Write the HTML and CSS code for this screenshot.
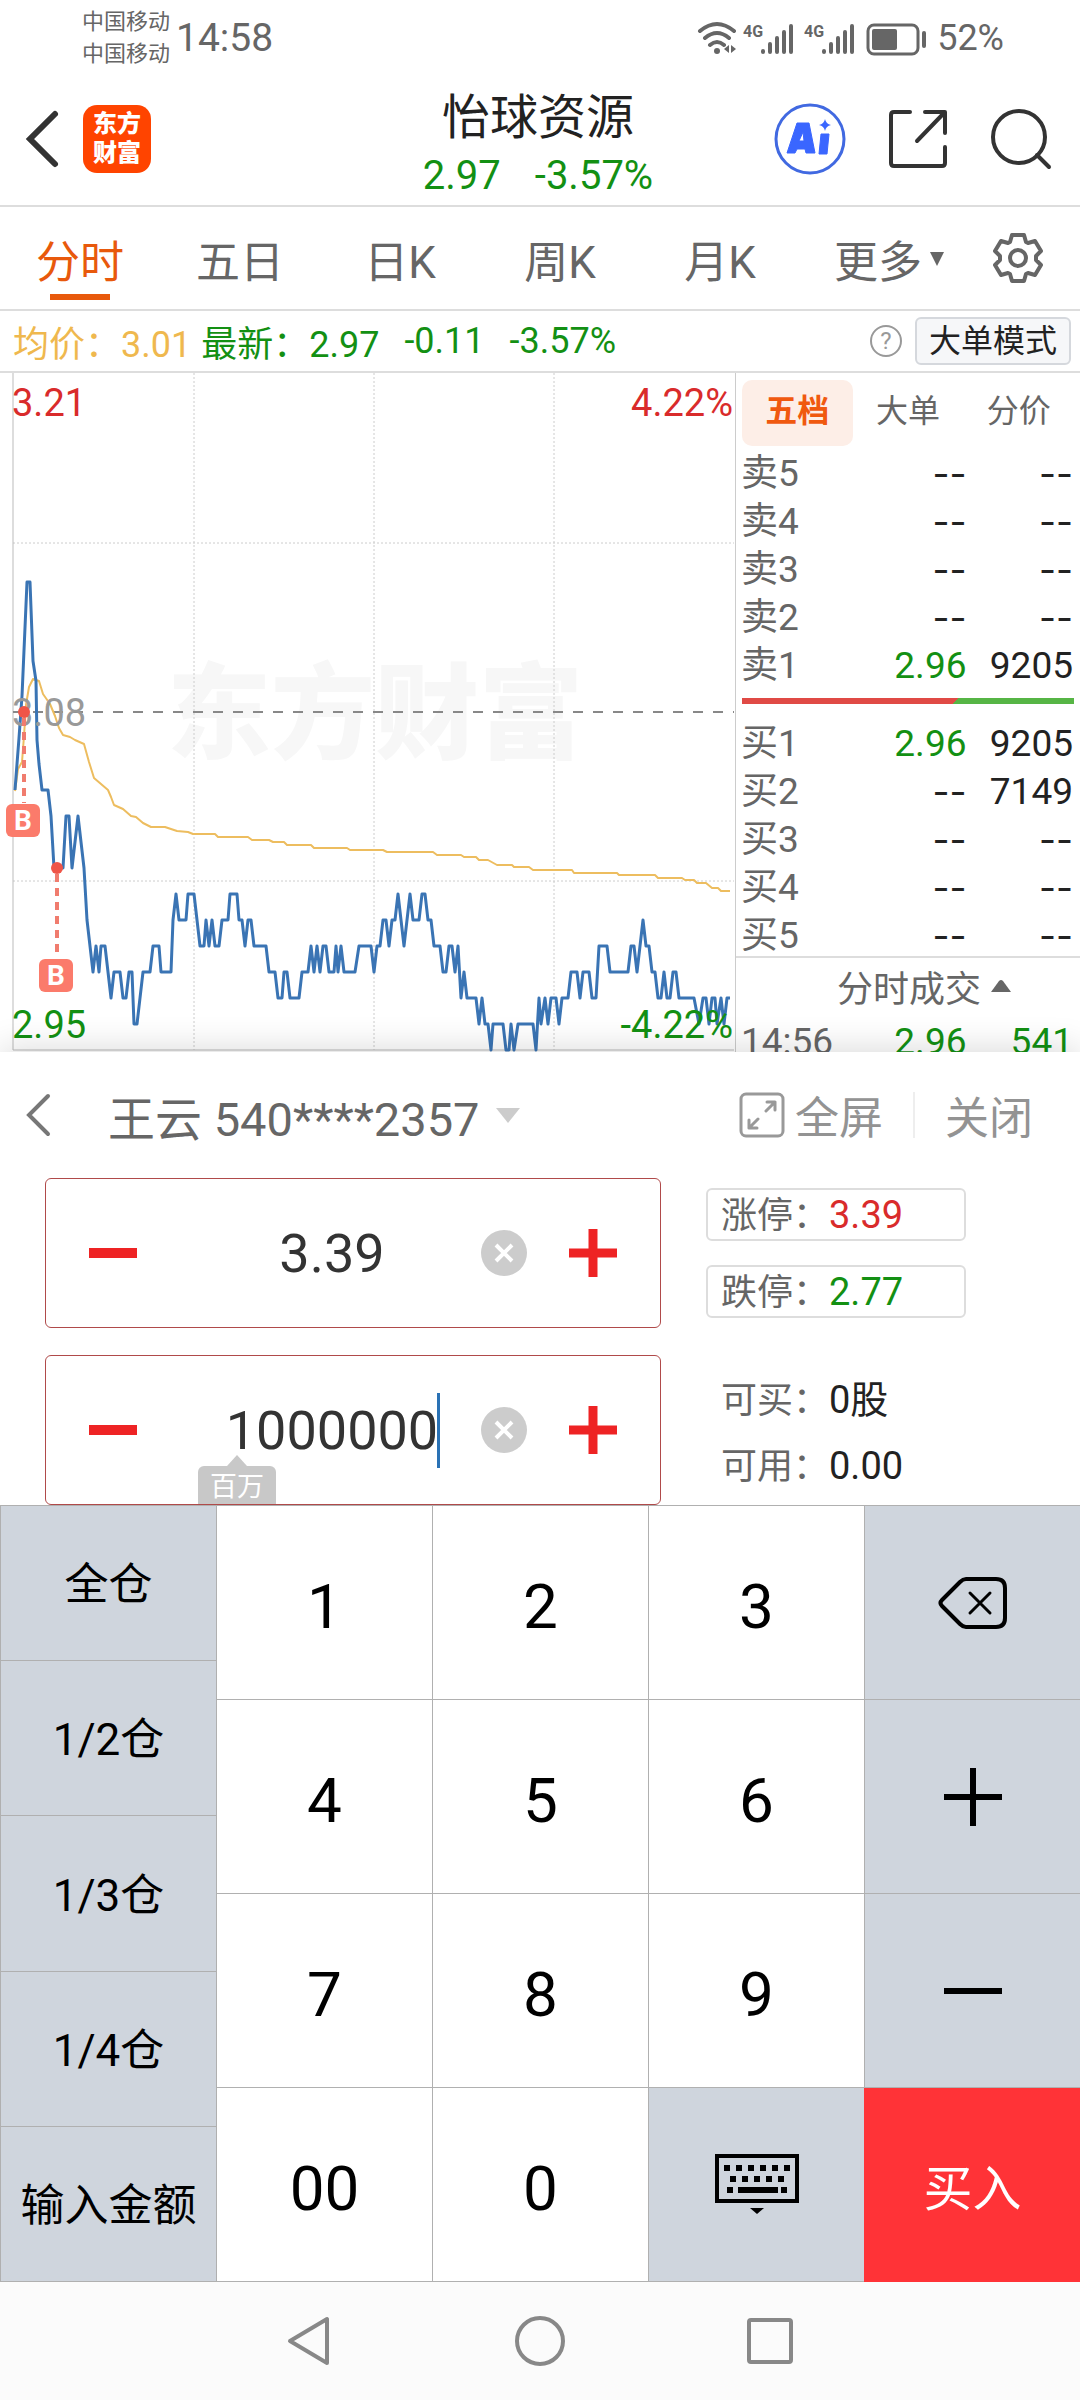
FILE: index.html
```html
<!DOCTYPE html>
<html lang="zh-CN">
<head>
    <meta charset="UTF-8">
    <meta name="viewport" content="width=device-width, initial-scale=1.0">
    <title>怡球资源 - 分时</title>
    <link rel="stylesheet" href="styles.css">
</head>
<body>
    <!-- 系统状态栏 -->
    <div class="status-bar">
        <div class="carriers">
            <span>中国移动</span>
            <span>中国移动</span>
        </div>
        <span class="clock">14:58</span>
        <svg class="status-icons" width="232" height="36" viewBox="0 0 232 36" aria-hidden="true">
            <g fill="none" stroke="#666" stroke-width="4" stroke-linecap="round">
                <path d="M3 11Q20 -3 37 11M8 18Q20 8 32 18M13 25Q20 19 27 25"/>
            </g>
            <circle cx="20" cy="31" r="3" fill="#666"/>
            <path d="M32 25v8l-5-4zM34 25v8l5-4z" fill="#666"/>
            <g class="net-label">
                <text x="46" y="17">4G</text>
                <text x="107" y="17">4G</text>
            </g>
            <g stroke="#666" stroke-width="4" stroke-linecap="round">
                <path d="M66 31v1M73 24v8M80 18v14M87 12v20M94 6v26"/>
                <path d="M127 31v1M134 24v8M141 18v14M148 12v20M155 6v26"/>
            </g>
            <rect x="171" y="5" width="50" height="29" rx="6" fill="none" stroke="#666" stroke-width="3"/>
            <rect x="175" y="9" width="25" height="21" rx="2" fill="#666"/>
            <path d="M227 13v13" stroke="#666" stroke-width="4" stroke-linecap="round"/>
        </svg>
        <span class="battery">52%</span>
    </div>

    <!-- 顶部标题 -->
    <header class="header">
        <div class="header-left">
            <button class="icon-btn" aria-label="返回">
                <svg width="36" height="60" viewBox="0 0 36 60"><path d="M31 5L6 30l25 25" fill="none" stroke="#333" stroke-width="6" stroke-linecap="round"/></svg>
            </button>
            <a class="logo" href="#"><span>东方</span><span>财富</span></a>
        </div>
        <div class="stock">
            <h1>怡球资源</h1>
            <div class="stock-price"><span>2.97</span><span>-3.57%</span></div>
        </div>
        <div class="header-right">
            <button class="icon-btn" aria-label="AI">
                <svg width="72" height="72" viewBox="0 0 72 72">
                    <circle cx="36" cy="36" r="34" fill="none" stroke="#4169e1" stroke-width="3"/>
                    <path d="M23 20h12l6 30h-9l-1-4h-8l-2 4h-8zM25 38h5l-1-9z" fill="#3a66ff" stroke="#3a66ff" stroke-linejoin="round"/>
                    <path d="M47 31h8l-2 20h-8z" fill="#3a66ff" stroke="#3a66ff" stroke-linejoin="round"/>
                    <path d="M51 16q1 5 6 6-5 1-6 6-1-5-6-6 5-1 6-6z" fill="#3a66ff"/>
                </svg>
            </button>
            <button class="icon-btn" aria-label="分享">
                <svg width="60" height="60" viewBox="0 0 60 60" fill="none" stroke="#333" stroke-width="4" stroke-linecap="round" stroke-linejoin="round">
                    <path d="M22 3H6q-3 0-3 3v48q0 3 3 3h48q3 0 3-3V38M37 3h20v21M56 4L29 32"/>
                </svg>
            </button>
            <button class="icon-btn" aria-label="搜索">
                <svg width="62" height="62" viewBox="0 0 62 62" fill="none" stroke="#333" stroke-width="4" stroke-linecap="round">
                    <circle cx="29" cy="29" r="26"/><path d="M47 47l12 12"/>
                </svg>
            </button>
        </div>
    </header>

    <!-- 周期切换 -->
    <nav class="tabs">
        <button class="tab active">分时</button>
        <button class="tab">五日</button>
        <button class="tab">日K</button>
        <button class="tab">周K</button>
        <button class="tab">月K</button>
        <button class="tab more">更多<svg width="14" height="14" viewBox="0 0 14 14"><path d="M0 0h14L7 14z" fill="#666"/></svg></button>
        <button class="icon-btn" aria-label="设置">
            <svg width="54" height="54" viewBox="0 0 54 54" fill="none" stroke="#666" stroke-width="4" stroke-linejoin="round">
                <path d="M21 4h12l2 7 2 1 7-2 6 10-5 5v4l5 5-6 10-7-2-2 1-2 7H21l-2-7-2-1-7 2-6-10 5-5v-4l-5-5 6-10 7 2 2-1z"/>
                <circle cx="27" cy="27" r="8"/>
            </svg>
        </button>
    </nav>

    <!-- 均价和最新价 -->
    <div class="quote-bar">
        <span class="avg">均价：3.01</span>
        <span class="latest">最新：2.97</span>
        <span class="latest change">-0.11</span>
        <span class="latest change">-3.57%</span>
        <button class="help" aria-label="帮助">?</button>
        <button class="mode-btn">大单模式</button>
    </div>

    <main class="quote">
        <!-- 分时图 -->
        <svg class="chart" viewBox="0 0 735 680" role="img" aria-label="分时走势图">
            <text class="watermark" x="375" y="378">东方财富</text>
            <g class="grid">
                <path d="M194 0v677M374 0v677M554 0v677M13 170h721M13 508h721"/>
            </g>
            <path d="M13 0v677h721" fill="none" stroke="#bbb" stroke-width="1"/>
            <path d="M13 339h721" stroke="#888" stroke-width="2" stroke-dasharray="10 10"/>
            <polyline class="avg-line" points="15,418 18,396 22,389 24,363 26,332 29,314 33,306 39,308 43,321 50,331 55,343 59,355 63,362 70,364 75,367 84,371 89,389 94,405 108,417 111,424 114,432 123,436 131,443 136,444 143,450 151,454 165,454 177,458 188,459 193,461 215,461 218,464 248,464 252,467 269,467 273,469 284,469 287,472 311,472 314,475 347,475 350,477 383,477 387,479 433,479 437,482 461,482 464,484 476,484 479,487 488,487 497,492 512,492 514,494 529,494 533,497 572,497 574,500 617,500 619,502 655,502 658,505 682,505 685,507 694,507 697,510 706,510 712,515 718,515 721,518 730,518"/>
            <polyline class="price-line" points="15,417 19,365 22,323 27,209 30,209 33,288 36,308 37,367 39,391 42,417 48,417 51,443 54,495 63,495 66,443 69,443 72,495 78,443 81,469 84,495 87,547 90,573 93,599 96,573 99,599 101,573 105,573 111,625 114,599 120,599 123,625 126,625 129,599 132,599 134,651 137,651 143,599 150,599 153,573 159,573 161,599 171,599 173,547 176,521 179,547 186,547 188,521 194,521 197,547 200,573 204,573 206,547 209,573 212,547 215,573 219,573 222,547 228,547 230,521 237,521 239,547 242,547 245,573 248,547 251,547 254,573 266,573 269,599 275,599 278,625 282,625 284,599 287,599 290,625 299,625 302,599 308,599 311,573 314,599 317,573 320,599 323,573 326,573 329,599 334,599 336,573 338,599 341,573 344,599 355,599 359,573 371,573 374,599 377,573 380,573 383,547 386,547 389,573 392,547 395,547 398,521 404,573 410,521 413,547 419,547 422,521 425,521 428,547 431,547 434,573 440,573 443,599 446,599 449,573 452,573 455,599 458,573 461,625 464,599 467,625 476,625 479,651 482,625 485,651 488,651 491,677 493,651 503,651 506,677 509,677 511,651 514,677 518,651 533,651 536,677 539,625 541,651 545,625 548,651 551,625 556,625 559,651 562,625 568,625 571,599 577,599 580,625 583,599 589,599 592,625 596,625 599,573 607,573 610,599 628,599 631,573 634,573 637,599 640,573 643,547 646,573 649,573 652,599 655,599 658,625 661,625 664,599 667,625 670,625 673,599 676,599 679,625 694,625 699,651 703,625 706,625 709,651 712,625 715,625 717,651 721,625 724,651 727,625 730,625"/>
            <text class="axis base" x="12" y="353">3.08</text>
            <!-- 买入点 -->
            <g class="buy-mark">
                <circle cx="24" cy="339" r="6"/>
                <path d="M24 345v85"/>
                <rect x="6" y="431" width="34" height="33" rx="6"/>
                <text x="23" y="457">B</text>
                <circle cx="57" cy="495" r="6"/>
                <path d="M57 501v84"/>
                <rect x="39" y="586" width="34" height="33" rx="6"/>
                <text x="56" y="612">B</text>
            </g>
            <text class="axis up" x="12" y="43">3.21</text>
            <text class="axis up end" x="733" y="43">4.22%</text>
            <text class="axis down" x="12" y="665">2.95</text>
            <text class="axis down end" x="733" y="665">-4.22%</text>
        </svg>

        <!-- 五档盘口 -->
        <section class="book">
            <div class="book-tabs">
                <button class="active">五档</button>
                <button>大单</button>
                <button>分价</button>
            </div>
            <table>
                <tr><th scope="row">卖5</th><td class="none">--</td><td class="none">--</td></tr>
                <tr><th scope="row">卖4</th><td class="none">--</td><td class="none">--</td></tr>
                <tr><th scope="row">卖3</th><td class="none">--</td><td class="none">--</td></tr>
                <tr><th scope="row">卖2</th><td class="none">--</td><td class="none">--</td></tr>
                <tr><th scope="row">卖1</th><td class="down">2.96</td><td>9205</td></tr>
            </table>
            <div class="ratio"></div>
            <table>
                <tr><th scope="row">买1</th><td class="down">2.96</td><td>9205</td></tr>
                <tr><th scope="row">买2</th><td class="none">--</td><td>7149</td></tr>
                <tr><th scope="row">买3</th><td class="none">--</td><td class="none">--</td></tr>
                <tr><th scope="row">买4</th><td class="none">--</td><td class="none">--</td></tr>
                <tr><th scope="row">买5</th><td class="none">--</td><td class="none">--</td></tr>
            </table>
            <button class="deals-title">分时成交<svg width="20" height="12" viewBox="0 0 20 12"><path d="M0 12L8 1q2-2 4 0l8 11z" fill="#666"/></svg></button>
            <table>
                <tr><th scope="row">14:56</th><td class="down">2.96</td><td class="down">541</td></tr>
            </table>
        </section>
    </main>

    <!-- 下单面板 -->
    <section class="trade">
        <div class="account">
            <button class="icon-btn" aria-label="收起">
                <svg width="26" height="44" viewBox="0 0 26 44"><path d="M23 3L4 22l19 19" fill="none" stroke="#777" stroke-width="4" stroke-linecap="round"/></svg>
            </button>
            <button class="account-name">王云 540****2357<svg width="24" height="15" viewBox="0 0 24 15"><path d="M0 0h24L12 15z" fill="#ccc"/></svg></button>
            <button class="full">
                <svg width="46" height="46" viewBox="0 0 46 46" fill="none" stroke="#999" stroke-width="3" stroke-linecap="round" stroke-linejoin="round">
                    <rect x="2" y="2" width="42" height="42" rx="5"/>
                    <path d="M27 19l9-9M28 10h8v8M19 27l-9 9M10 28v8h8"/>
                </svg>全屏
            </button>
            <button class="close">关闭</button>
        </div>

        <div class="order">
            <div class="fields">
                <div class="stepper">
                    <button class="step" aria-label="减少价格"><svg width="48" height="48"><path d="M0 24h48" stroke="#ee2324" stroke-width="10"/></svg></button>
                    <div class="value"><input type="text" value="3.39" aria-label="价格"></div>
                    <button class="clear" aria-label="清空价格"><svg width="46" height="46"><circle cx="23" cy="23" r="23" fill="#ccc"/><path d="M15 15l16 16M31 15L15 31" stroke="#fff" stroke-width="4"/></svg></button>
                    <button class="step" aria-label="增加价格"><svg width="48" height="48"><path d="M0 24h48M24 0v48" stroke="#ee2324" stroke-width="9"/></svg></button>
                </div>
                <div class="stepper">
                    <button class="step" aria-label="减少数量"><svg width="48" height="48"><path d="M0 24h48" stroke="#ee2324" stroke-width="10"/></svg></button>
                    <div class="value"><input type="text" value="1000000" aria-label="数量"><i class="caret"></i></div>
                    <button class="clear" aria-label="清空数量"><svg width="46" height="46"><circle cx="23" cy="23" r="23" fill="#ccc"/><path d="M15 15l16 16M31 15L15 31" stroke="#fff" stroke-width="4"/></svg></button>
                    <button class="step" aria-label="增加数量"><svg width="48" height="48"><path d="M0 24h48M24 0v48" stroke="#ee2324" stroke-width="9"/></svg></button>
                    <span class="unit-tip">百万</span>
                </div>
            </div>
            <div class="limits">
                <button class="limit">涨停：<b class="up">3.39</b></button>
                <button class="limit">跌停：<b class="down">2.77</b></button>
                <div class="avail first">可买：<b>0股</b></div>
                <div class="avail">可用：<b>0.00</b></div>
            </div>
        </div>
    </section>

    <!-- 数字键盘 -->
    <section class="keyboard">
        <div class="quick">
            <button>全仓</button>
            <button>1/2仓</button>
            <button>1/3仓</button>
            <button>1/4仓</button>
            <button>输入金额</button>
        </div>
        <div class="keys">
            <button>1</button>
            <button>2</button>
            <button>3</button>
            <button class="fn" aria-label="删除">
                <svg width="70" height="54" viewBox="0 0 70 54" fill="none" stroke="#000" stroke-width="4" stroke-linejoin="round" stroke-linecap="round">
                    <path d="M28 3h30q9 0 9 9v30q0 9-9 9H28q-3 0-6-3L4 30q-3-3 0-6L22 6q3-3 6-3z"/>
                    <path d="M32 17l20 20M52 17L32 37" stroke-width="3"/>
                </svg>
            </button>
            <button>4</button>
            <button>5</button>
            <button>6</button>
            <button class="fn" aria-label="加"><svg width="58" height="58"><path d="M0 29h58M29 0v58" stroke="#000" stroke-width="6"/></svg></button>
            <button>7</button>
            <button>8</button>
            <button>9</button>
            <button class="fn" aria-label="减"><svg width="58" height="58"><path d="M0 29h58" stroke="#000" stroke-width="6"/></svg></button>
            <button>00</button>
            <button>0</button>
            <button class="fn" aria-label="切换键盘">
                <svg width="84" height="62" viewBox="0 0 84 62">
                    <rect x="2" y="2" width="80" height="45" fill="none" stroke="#000" stroke-width="4"/>
                    <g stroke="#000" stroke-width="6">
                        <path d="M9 14h66" stroke-dasharray="6 6"/>
                        <path d="M15 25h55" stroke-dasharray="6 6"/>
                        <path d="M12 36h6M23 36h40M66 36h6"/>
                    </g>
                    <path d="M35 54h14l-7 6z"/>
                </svg>
            </button>
            <button class="buy">买入</button>
        </div>
    </section>

    <!-- 系统导航栏 -->
    <nav class="sys-nav">
        <button class="icon-btn" aria-label="返回上一页"><svg width="50" height="52" viewBox="0 0 50 52"><path d="M42 4v44L5 26z" fill="none" stroke="#888" stroke-width="4" stroke-linejoin="round"/></svg></button>
        <button class="icon-btn" aria-label="主页"><svg width="50" height="50"><circle cx="25" cy="25" r="23" fill="none" stroke="#888" stroke-width="4"/></svg></button>
        <button class="icon-btn" aria-label="最近任务"><svg width="50" height="50"><rect x="4" y="4" width="42" height="42" rx="2" fill="none" stroke="#888" stroke-width="4"/></svg></button>
    </nav>
</body>
</html>
```
FILE: styles.css
```css
* {
    margin: 0;
    padding: 0;
    box-sizing: border-box;
}

body {
    font-family: Roboto, "Noto Sans CJK SC", sans-serif;
    font-size: 36px;
    color: #222;
    background: #fff;
}

button {
    font: inherit;
    color: inherit;
    background: none;
    border: none;
    cursor: pointer;
}

svg {
    display: block;
    flex: none;
}

.up {
    color: #d92b2b;
    fill: #d92b2b;
}

.down {
    color: #139013;
    fill: #139013;
}

/* 状态栏 */
.status-bar {
    display: flex;
    align-items: center;
    height: 76px;
    padding: 0 76px 0 82px;
    color: #666;
}

.carriers {
    display: flex;
    flex-direction: column;
    font-size: 22px;
    line-height: 32px;
}

.clock {
    margin-left: 6px;
    font-size: 39px;
}

.status-icons {
    margin-left: auto;
}

.net-label {
    font-size: 16px;
    font-weight: bold;
    fill: #666;
}

.battery {
    margin-left: 8px;
}

/* 标题栏 */
.header {
    display: grid;
    grid-template-columns: 1fr auto 1fr;
    align-items: center;
    height: 131px;
    padding: 0 28px 4px 24px;
    border-bottom: 2px solid #ddd;
}

.header-left,
.header-right {
    display: flex;
    align-items: center;
}

.header-left {
    gap: 23px;
}

.header-right {
    justify-content: flex-end;
    gap: 42px;
}

.logo {
    display: flex;
    flex-direction: column;
    justify-content: center;
    width: 68px;
    height: 68px;
    border-radius: 14px;
    background: #ff4400;
    color: #fff;
    font-size: 24px;
    font-weight: 900;
    line-height: 29px;
    text-align: center;
    text-decoration: none;
}

.stock {
    padding-top: 8px;
    text-align: center;
}

.stock h1 {
    font-size: 48px;
    font-weight: normal;
    line-height: 66px;
}

.stock-price {
    display: flex;
    justify-content: center;
    gap: 34px;
    font-size: 40px;
    line-height: 50px;
    color: #139013;
}

/* 周期 */
.tabs {
    display: grid;
    grid-template-columns: repeat(5, 160fr) 178fr 80fr;
    align-items: center;
    justify-items: center;
    height: 104px;
    padding-right: 22px;
    border-bottom: 2px solid #ddd;
    font-size: 44px;
    color: #666;
}

.tab {
    display: flex;
    align-items: center;
    height: 84px;
    padding-top: 2px;
}

.tab.active {
    color: #e8590c;
    background: linear-gradient(#e8590c, #e8590c) bottom / 60px 6px no-repeat;
}

.more {
    gap: 8px;
}

/* 价格条 */
.quote-bar {
    display: flex;
    align-items: center;
    height: 62px;
    padding: 0 9px 0 13px;
    border-bottom: 2px solid #ddd;
}

.avg {
    color: #efb84e;
}

.latest {
    margin-left: 10px;
    color: #139013;
}

.change {
    margin-left: 25px;
}

.help {
    width: 32px;
    height: 32px;
    margin-left: auto;
    border: 2px solid #999;
    border-radius: 50%;
    font-size: 24px;
    line-height: 28px;
    color: #999;
}

.mode-btn {
    height: 48px;
    margin-left: 13px;
    padding: 0 12px;
    border: 2px solid #d5d8dd;
    border-radius: 6px;
    background: #f6f7f9;
    font-size: 32px;
    line-height: 44px;
}

/* 图表 */
.quote {
    display: grid;
    grid-template-columns: 735fr 345fr;
    align-items: start;
}

.chart {
    width: 100%;
}

.grid {
    stroke: #ccc;
    stroke-dasharray: 2 2;
}

.watermark {
    font-size: 104px;
    font-weight: 900;
    text-anchor: middle;
    fill: #f7f7f7;
}

.avg-line,
.price-line {
    fill: none;
    stroke: #edbd5f;
    stroke-width: 2;
    stroke-linejoin: round;
}

.price-line {
    stroke: #3a74b4;
    stroke-width: 3;
}

.axis {
    font-size: 38px;
}

.base {
    fill: #999;
}

.end {
    text-anchor: end;
}

.buy-mark {
    fill: #fb7b6b;
}

.buy-mark circle {
    fill: #ef5548;
}

.buy-mark path {
    stroke: #f07c6e;
    stroke-width: 4;
    stroke-dasharray: 8 6;
}

.buy-mark text {
    font-size: 28px;
    font-weight: bold;
    text-anchor: middle;
    fill: #fff;
}

/* 盘口 */
.book {
    border-left: 1px solid #ccc;
}

.book-tabs {
    display: grid;
    grid-template-columns: 1fr 1fr 1fr;
    padding: 7px 6px 4px;
    font-size: 32px;
    line-height: 62px;
    color: #666;
}

.book-tabs button {
    height: 66px;
    padding-bottom: 4px;
    border-radius: 10px;
}

.book-tabs .active {
    background: #fdeee7;
    color: #f0590f;
    font-weight: bold;
}

.book table {
    width: 100%;
    table-layout: fixed;
    border-collapse: collapse;
}

.book th {
    width: 34%;
    padding-left: 5px;
    font-weight: normal;
    text-align: left;
    color: #666;
}

.book td,
.book th {
    height: 48px;
    font-size: 37px;
    line-height: 48px;
}

.book td {
    text-align: right;
}

.book td:last-child {
    padding-right: 7px;
}

.book .none {
    font-family: Inter, sans-serif;
}

.ratio {
    height: 6px;
    margin: 8px 6px 16px;
    background: linear-gradient(135deg, #e04a45 64%, #56b545 64%);
}

.deals-title {
    display: flex;
    align-items: center;
    justify-content: center;
    gap: 10px;
    width: 100%;
    height: 62px;
    margin-top: -4px;
    padding: 0 0 4px 32px;
    border-top: 2px solid #ddd;
    color: #666;
}

/* 下单，盖住成交列表的下半部分 */
.trade {
    position: relative;
    margin-top: -14px;
    background: #fff;
    box-shadow: 0 -4px 32px rgba(0, 0, 0, 0.14);
}

.account {
    display: flex;
    align-items: center;
    height: 126px;
    padding: 0 47px 0 25px;
    font-size: 44px;
    color: #939393;
}

.account-name {
    display: flex;
    align-items: center;
    gap: 16px;
    margin-left: 57px;
    font-size: 47px;
    color: #666;
}

.full {
    display: flex;
    align-items: center;
    gap: 10px;
    height: 46px;
    margin-left: auto;
    padding-right: 30px;
    border-right: 2px solid #eee;
}

.close {
    margin-left: 30px;
}

.order {
    display: grid;
    grid-template-columns: 616fr 374fr;
    gap: 45px;
    padding-left: 45px;
}

.fields {
    display: flex;
    flex-direction: column;
    gap: 27px;
}

.stepper {
    position: relative;
    display: flex;
    align-items: center;
    height: 150px;
    padding: 0 43px;
    border: 1px solid #b04a4a;
    border-radius: 6px;
    overflow: hidden;
}

.value {
    position: relative;
    flex: 1;
    min-width: 0;
    margin-left: 46px;
    font-size: 54px;
    color: #333;
}

.value input {
    width: 100%;
    border: none;
    outline: none;
    background: none;
    font: inherit;
    color: inherit;
    text-align: center;
}

.caret {
    position: absolute;
    left: calc(50% + 4ch - 13px);
    top: -6px;
    bottom: -6px;
    width: 3px;
    background: #2a72b5;
}

.clear {
    margin-right: 42px;
}

.unit-tip {
    position: absolute;
    left: 152px;
    top: 110px;
    width: 78px;
    height: 44px;
    border-radius: 6px;
    background: #c8c8c8;
    color: #fff;
    font-size: 27px;
    line-height: 42px;
    text-align: center;
}

.unit-tip::before {
    content: "";
    position: absolute;
    left: 29px;
    top: -11px;
    border: 10px solid transparent;
    border-top-width: 0;
    border-bottom: 11px solid #c8c8c8;
}

.limits {
    display: flex;
    flex-direction: column;
    align-items: flex-start;
    padding-top: 10px;
    color: #666;
}

.limits b {
    font-size: 38px;
    font-weight: normal;
}

.limit {
    width: 260px;
    height: 53px;
    margin-bottom: 24px;
    padding-left: 13px;
    border: 2px solid #ddd;
    border-radius: 6px;
    text-align: left;
    line-height: 50px;
}

.avail {
    padding-left: 15px;
    line-height: 65px;
}

.avail.first {
    margin-top: 26px;
}

.avail b {
    color: #222;
}

/* 键盘 */
.keyboard {
    position: relative;
    display: grid;
    grid-template-columns: 1fr 4fr;
    border-top: 1px solid #b0b0b0;
    background: #fff;
    color: #000;
}

.quick {
    display: flex;
    flex-direction: column;
    background: #cfd5dd;
    font-size: 44px;
}

.quick button {
    flex: 1;
    padding-bottom: 4px;
    border-bottom: 1px solid #b0b0b0;
    border-left: 1px solid #b0b0b0;
}

.keys {
    display: grid;
    grid-template-columns: repeat(4, 1fr);
    grid-auto-rows: 194px;
    font-size: 62px;
}

.keys button {
    display: flex;
    align-items: center;
    justify-content: center;
    border-left: 1px solid #b0b0b0;
    border-bottom: 1px solid #b0b0b0;
    padding-top: 8px;
}

.keys .fn {
    background: #cfd5dd;
    padding-top: 0;
}

.keys .buy {
    padding-top: 0;
    border-color: #ff3337;
    background: #ff3337;
    color: #fff;
    font-size: 49px;
}

/* 导航栏 */
.sys-nav {
    display: flex;
    justify-content: center;
    align-items: center;
    gap: 180px;
    height: 118px;
    background: #fbfbfb;
}
```
